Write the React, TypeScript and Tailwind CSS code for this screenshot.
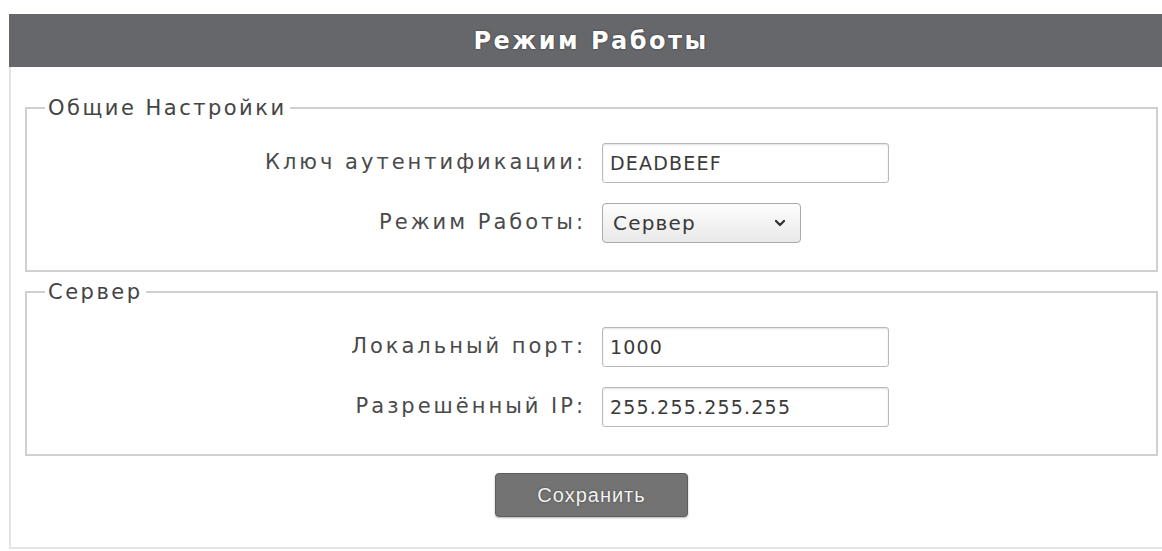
import React from "react";
import { ChevronDown } from "lucide-react";

const font = { fontFamily: '"DejaVu Sans", Verdana, sans-serif' };

function Row({ label, children }: { label: string; children: React.ReactNode }) {
  return (
    <div className="flex items-center h-[40px]">
      <div className="w-[559px] text-right text-[21px] tracking-[3px] text-[#4a4a4a] whitespace-nowrap">{label}</div>
      <div className="ml-[16px] flex">{children}</div>
    </div>
  );
}

function TextInput({ value }: { value: string }) {
  return (
    <input
      readOnly
      value={value}
      className="w-[287px] h-[40px] border border-[#b9b9b9] rounded-[3px] bg-white px-[7px] text-[19px] tracking-[1.2px] text-[#3a3a3a] shadow-[inset_0_1px_2px_rgba(0,0,0,0.12)] outline-none"
      style={font}
    />
  );
}

export default function App() {
  return (
    <div className="min-h-screen bg-white pt-[14px] pl-[9px]" style={font}>
      <div className="w-[1164px]">
        <div className="h-[53px] bg-[#66676b] flex items-center justify-center text-white font-bold text-[24px] tracking-[2.5px] [text-shadow:0_0_2px_rgba(0,0,0,0.6)]">
          Режим Работы
        </div>
        <div className="border-l-2 border-b-2 border-[#e4e4e4] pl-[14px] pt-[29px] pb-[30px]">
          <fieldset className="w-[1133px] border-2 border-[#d0d0d0] pl-[18px] pt-[23px] pb-[27px]">
            <legend className="px-[3px] text-[21px] leading-[24px] tracking-[2.5px] text-[#444]">Общие Настройки</legend>
            <div className="-ml-[18px] flex flex-col gap-[20px]">
              <Row label="Ключ аутентификации:">
                <TextInput value="DEADBEEF" />
              </Row>
              <Row label="Режим Работы:">
                <div className="w-[199px] h-[40px] border border-[#aaaaaa] rounded-[4px] bg-gradient-to-b from-[#fdfdfd] to-[#e9e9e9] flex items-center justify-between pl-[10px] pr-[12px] text-[20px] tracking-[1.2px] text-[#3a3a3a]">
                  <span>Сервер</span>
                  <ChevronDown size={16} strokeWidth={3.5} className="text-[#333]" />
                </div>
              </Row>
            </div>
          </fieldset>
          <fieldset className="mt-[8px] w-[1133px] border-2 border-[#d0d0d0] pl-[18px] pt-[23px] pb-[27px]">
            <legend className="px-[3px] text-[21px] leading-[24px] tracking-[2.5px] text-[#444]">Сервер</legend>
            <div className="-ml-[18px] flex flex-col gap-[20px]">
              <Row label="Локальный порт:">
                <TextInput value="1000" />
              </Row>
              <Row label="Разрешённый IP:">
                <TextInput value="255.255.255.255" />
              </Row>
            </div>
          </fieldset>
          <div className="w-[1133px] flex justify-center mt-[17px]">
            <button
              className="w-[193px] h-[44px] bg-[#737373] border border-[#5e5e5e] rounded-[4px] text-[#f4f4f4] text-[20px] tracking-[1px] shadow-[0_1px_2px_rgba(0,0,0,0.3)] [text-shadow:0_0_2px_rgba(0,0,0,0.5)]"
              style={{ fontFamily: '"Liberation Sans", Arial, sans-serif' }}
            >
              Сохранить
            </button>
          </div>
        </div>
      </div>
    </div>
  );
}
